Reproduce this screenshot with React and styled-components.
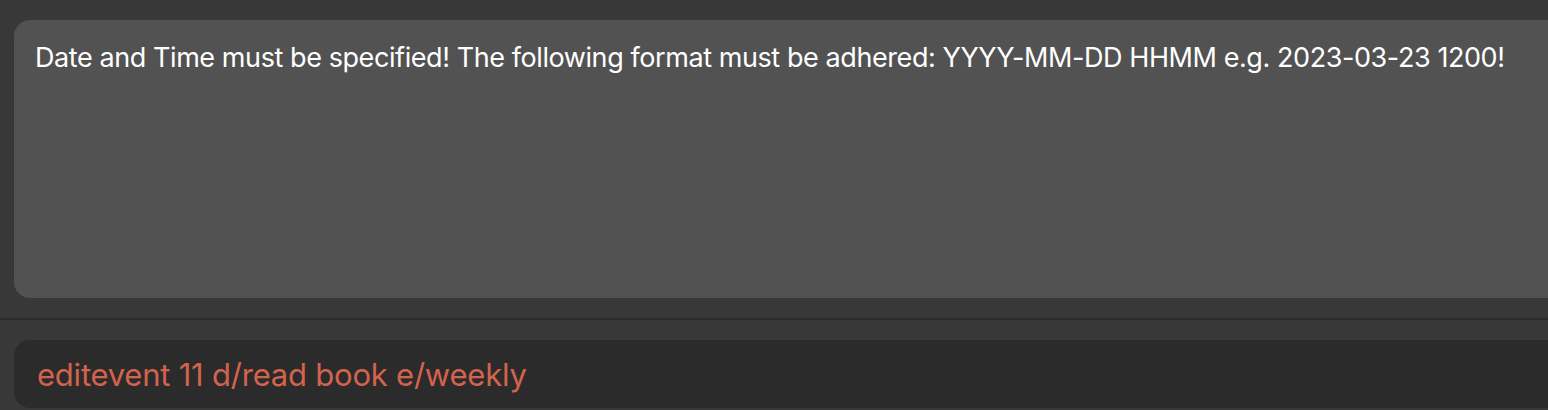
import React from "react";
import styled, { createGlobalStyle } from "styled-components";

const Global = createGlobalStyle`
  html, body { margin: 0; padding: 0; }
  body {
    background: #383838;
    overflow: hidden;
    font-family: Inter, "Noto Sans", sans-serif;
  }
`;

const Page = styled.div`
  width: 1548px;
  height: 410px;
  background: #383838;
  display: flex;
  flex-direction: column;
  overflow: hidden;
`;

const ResultArea = styled.div`
  padding: 20px 0 20px 14px;
`;

const ResultBox = styled.div`
  width: 1560px;
  height: 278px;
  box-sizing: border-box;
  background: #525252;
  border-radius: 16px;
  padding: 22px 21px;
  color: #ffffff;
  font-size: 27px;
  letter-spacing: -0.42px;
  line-height: 32px;
`;

const Divider = styled.div`
  height: 2px;
  background: #2b2b2b;
`;

const CommandArea = styled.div`
  padding: 20px 0 0 14px;
`;

const CommandBox = styled.div`
  width: 1560px;
  height: 68px;
  box-sizing: border-box;
  background: #2b2b2b;
  border-radius: 16px;
  padding: 0 23px;
  display: flex;
  align-items: center;
  color: #d3634d;
  font-size: 31px;
  letter-spacing: -0.22px;
`;

export default function App() {
  return (
    <>
      <Global />
      <Page>
        <ResultArea>
          <ResultBox>
            Date and Time must be specified! The following format must be adhered: YYYY-MM-DD HHMM e.g. 2023-03-23 1200!
          </ResultBox>
        </ResultArea>
        <Divider />
        <CommandArea>
          <CommandBox>editevent 11 d/read book e/weekly</CommandBox>
        </CommandArea>
      </Page>
    </>
  );
}
